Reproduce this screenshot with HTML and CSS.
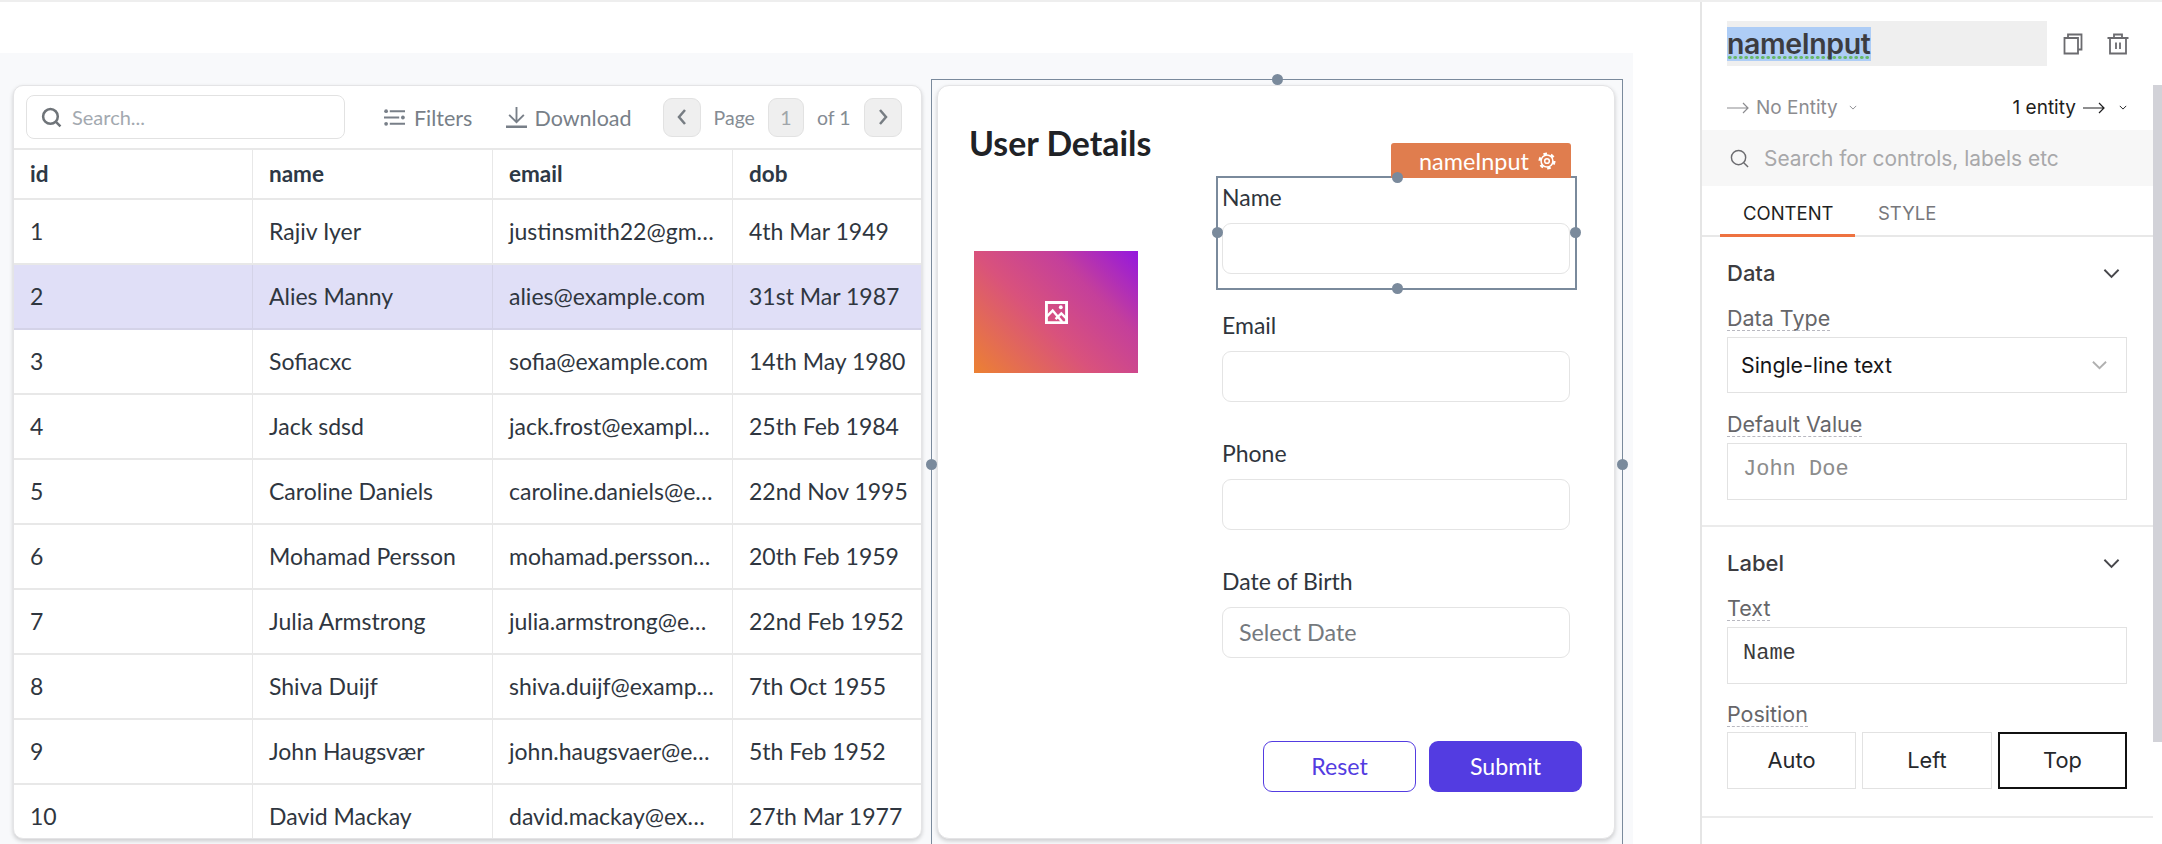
FILE: index.html
```html
<!DOCTYPE html>
<html lang="en">
<head>
    <meta charset="UTF-8">
    <title>Form builder</title>
    <link rel="stylesheet" href="styles.css">
</head>
<body>
    <div class="app">
        <div class="workspace">
            <div class="topbar"></div>
            <div class="canvas">
                <!-- Table widget -->
                <div class="table-card">
                    <div class="toolbar">
                        <div class="search-box">
                            <svg class="search-icon" viewBox="0 0 20 20"><circle cx="9" cy="9" r="7"/><path d="M14 14l4.500 4.500"/></svg>
                            <span>Search...</span>
                        </div>
                        <div class="tool tool-filters">
                            <svg viewBox="0 0 20 20"><path d="M5.500 4H20M0 10h14.500M5.500 16H20"/><circle class="dot" cx="2" cy="4" r="1.800"/><circle class="dot" cx="18" cy="10" r="1.800"/><circle class="dot" cx="2" cy="16" r="1.800"/></svg>
                            <span>Filters</span>
                        </div>
                        <div class="tool tool-download">
                            <svg viewBox="0 0 20 20"><path d="M10 0v14M3 7.500l7 7 7-7"/><path class="base" d="M0 19h20"/></svg>
                            <span>Download</span>
                        </div>
                        <div class="pager">
                            <div class="page-btn"><svg viewBox="0 0 12 20"><path d="M9 3L3 10l6 7"/></svg></div>
                            <span class="page-text">Page</span>
                            <div class="page-num">1</div>
                            <span class="page-text">of 1</span>
                            <div class="page-btn"><svg viewBox="0 0 12 20"><path d="M3 3l6 7-6 7"/></svg></div>
                        </div>
                    </div>
                    <table class="users">
                        <thead>
                            <tr><th>id</th><th>name</th><th>email</th><th>dob</th></tr>
                        </thead>
                        <tbody>
                            <tr><td>1</td><td>Rajiv Iyer</td><td>justinsmith22@gmail.com</td><td>4th Mar 1949</td></tr>
                            <tr class="active"><td>2</td><td>Alies Manny</td><td>alies@example.com</td><td>31st Mar 1987</td></tr>
                            <tr><td>3</td><td>Sofiacxc</td><td>sofia@example.com</td><td>14th May 1980</td></tr>
                            <tr><td>4</td><td>Jack sdsd</td><td>jack.frost@example.com</td><td>25th Feb 1984</td></tr>
                            <tr><td>5</td><td>Caroline Daniels</td><td>caroline.daniels@example.com</td><td>22nd Nov 1995</td></tr>
                            <tr><td>6</td><td>Mohamad Persson</td><td>mohamad.persson@example.com</td><td>20th Feb 1959</td></tr>
                            <tr><td>7</td><td>Julia Armstrong</td><td>julia.armstrong@example.com</td><td>22nd Feb 1952</td></tr>
                            <tr><td>8</td><td>Shiva Duijf</td><td>shiva.duijf@example.com</td><td>7th Oct 1955</td></tr>
                            <tr><td>9</td><td>John Haugsvær</td><td>john.haugsvaer@example.com</td><td>5th Feb 1952</td></tr>
                            <tr><td>10</td><td>David Mackay</td><td>david.mackay@example.com</td><td>27th Mar 1977</td></tr>
                        </tbody>
                    </table>
                </div>

                <!-- Form widget -->
                <div class="form-frame">
                    <span class="handle handle-top"></span>
                    <span class="handle handle-left"></span>
                    <span class="handle handle-right"></span>
                    <div class="form-card">
                        <div class="form-left">
                            <h2>User Details</h2>
                            <div class="image-box">
                                <svg viewBox="0 0 24 24"><path class="frame" d="M1.500 1.500h21v21h-21z"/><path class="scene" d="M2 16l6-6 10 12M11 19l6-6 6 6"/><circle cx="16.500" cy="6.500" r="2"/></svg>
                            </div>
                        </div>
                        <div class="form-right">
                            <div class="field">
                                <div class="selected-box">
                                    <div class="name-tag">nameInput
                                        <svg viewBox="0 0 20 20"><circle class="gear-teeth" cx="10" cy="10" r="8.200"/><circle cx="10" cy="10" r="6.600"/><circle cx="10" cy="10" r="2.600"/></svg>
                                    </div>
                                    <span class="handle handle-top"></span>
                                    <span class="handle handle-left"></span>
                                    <span class="handle handle-right"></span>
                                    <span class="handle handle-bottom"></span>
                                </div>
                                <label>Name</label>
                                <div class="text-input"></div>
                            </div>
                            <div class="field">
                                <label>Email</label>
                                <div class="text-input"></div>
                            </div>
                            <div class="field">
                                <label>Phone</label>
                                <div class="text-input"></div>
                            </div>
                            <div class="field">
                                <label>Date of Birth</label>
                                <div class="text-input placeholder">Select Date</div>
                            </div>
                            <div class="form-actions">
                                <button class="btn btn-outline">Reset</button>
                                <button class="btn btn-primary">Submit</button>
                            </div>
                        </div>
                    </div>
                </div>
            </div>
        </div>

        <!-- Properties panel -->
        <div class="panel">
            <div class="panel-scrollbar"></div>
            <div class="panel-head">
                <div class="name-input"><span class="name-selected">nameInput</span></div>
                <svg class="head-icon" viewBox="0 0 20 22"><path d="M5 5V1.500h13.500v15H15"/><path d="M1.500 5h13.500v15.500H1.500z"/></svg>
                <svg class="head-icon trash" viewBox="0 0 22 22"><path d="M0.500 5h21M7 5V1.500h8V5M3 5v15.500h16V5M9 9.500v6.500M13 9.500v6.500"/></svg>
            </div>
            <div class="entity-row">
                <div class="entity muted">
                    <svg class="arrow" viewBox="0 0 22 12"><path d="M0 6h21M16 1l5 5-5 5"/></svg>
                    <span>No Entity</span>
                    <svg class="mini-chevron" viewBox="0 0 10 6"><path d="M1 1l4 4 4-4"/></svg>
                </div>
                <div class="entity">
                    <span>1 entity</span>
                    <svg class="arrow" viewBox="0 0 22 12"><path d="M0 6h21M16 1l5 5-5 5"/></svg>
                    <svg class="mini-chevron" viewBox="0 0 10 6"><path d="M1 1l4 4 4-4"/></svg>
                </div>
            </div>
            <div class="control-search">
                <svg viewBox="0 0 20 20"><circle cx="9" cy="9" r="7.500"/><path d="M14.500 14.500l4.500 4.500"/></svg>
                <span>Search for controls, labels etc</span>
            </div>
            <div class="tabs">
                <div class="tab tab-active">CONTENT</div>
                <div class="tab">STYLE</div>
            </div>
            <div class="section">
                <div class="section-title">
                    <span>Data</span>
                    <svg viewBox="0 0 18 11"><path d="M1.500 1.500L9 9l7.500-7.500"/></svg>
                </div>
                <div class="prop-label"><span>Data Type</span></div>
                <div class="prop-select">
                    <span>Single-line text</span>
                    <svg viewBox="0 0 16 10"><path d="M1 1.500l7 7 7-7"/></svg>
                </div>
                <div class="prop-label"><span>Default Value</span></div>
                <div class="prop-input code-placeholder">John Doe</div>
            </div>
            <div class="section">
                <div class="section-title">
                    <span>Label</span>
                    <svg viewBox="0 0 18 11"><path d="M1.500 1.500L9 9l7.500-7.500"/></svg>
                </div>
                <div class="prop-label"><span>Text</span></div>
                <div class="prop-input">Name</div>
                <div class="prop-label"><span>Position</span></div>
                <div class="segments">
                    <div class="segment">Auto</div>
                    <div class="segment">Left</div>
                    <div class="segment segment-on">Top</div>
                </div>
            </div>
        </div>
    </div>
</body>
</html>
```

FILE: styles.css
```css
* { box-sizing: border-box; }
html, body { margin: 0; height: 100%; overflow: hidden; background: white; }
body { font-family: Lato, sans-serif; }
svg { display: block; fill: none; stroke: currentColor; }

.app { display: flex; height: 844px; border-top: 2px solid #eeeeee; }
.workspace { width: 1633px; margin-right: 67px; display: flex; flex-direction: column; }
.topbar { height: 51px; flex: none; }
.canvas { flex: 1; min-height: 0; background: #f8f9fb; display: flex; align-items: flex-start; padding: 26px 0 0 13px; overflow: hidden; }

/* table card */
.table-card { width: 909px; height: 754px; margin-top: 6px; background: white; border: 1px solid #e4e4e6; border-radius: 10px; box-shadow: 0 2px 4px rgba(0, 0, 0, 0.18); overflow: hidden; flex: none; }
.toolbar { height: 64px; display: flex; align-items: center; padding-left: 12px; border-bottom: 2px solid #e8e8e8; }
.search-box { width: 319px; height: 44px; border: 1.500px solid #e2e2e2; border-radius: 8px; display: flex; align-items: center; padding-left: 14px; color: #a3a9b0; font-size: 20px; }
.search-icon { width: 21px; height: 21px; margin-right: 10px; color: #6f7479; stroke-width: 2.400; }
.tool { display: flex; align-items: center; margin-top: 1px; color: #787f88; font-size: 21.500px; }
.tool svg { width: 21px; height: 21px; stroke-width: 1.800; margin-right: 9px; }
.tool .dot { fill: currentColor; stroke: none; }
.tool .base { stroke-width: 2.600; }
.tool-filters { margin-left: 39px; }
.tool-download { margin-left: 34px; }
.tool-download svg { margin-right: 7px; }
.pager { display: flex; align-items: center; margin-left: 31px; color: #858c94; font-size: 19.500px; }
.page-btn { width: 38px; height: 39px; background: #efefef; border: 1px solid #e2e2e2; border-radius: 9px; display: flex; align-items: center; justify-content: center; color: #777d83; }
.page-btn svg { width: 12px; height: 20px; stroke-width: 2.500; }
.page-text { margin: 0 13px; }
.page-num { width: 36px; height: 39px; background: #efefef; border: 1px solid #e2e2e2; border-radius: 9px; display: flex; align-items: center; justify-content: center; color: #a0a5aa; }

.users { width: 959px; table-layout: fixed; border-collapse: separate; border-spacing: 0; font-size: 23px; color: #2f3640; }
.users th, .users td { border-bottom: 2px solid #e8e8e8; border-right: 1px solid #e8e8e8; padding: 0 16px 2px 16px; white-space: nowrap; overflow: hidden; text-overflow: ellipsis; text-align: left; }
.users th:first-child, .users td:first-child { width: 239px; padding-left: 16px; }
.users th { height: 50px; font-size: 22.500px; font-weight: 700; color: #2d3845; }
.users td { height: 65px; }
.users tr.active td { background: #e0dff7; border-color: #d4d3e8; }

/* form card */
.form-frame { position: relative; width: 692px; height: 772px; margin-left: 9px; flex: none; border: 1.500px solid #7a8a9c; padding: 5px 5px; }
.handle { position: absolute; width: 11px; height: 11px; border-radius: 50%; background: #7a8a9c; }
.handle-top { top: -6px; left: 50%; margin-left: -5px; }
.handle-bottom { bottom: -6px; left: 50%; margin-left: -5px; }
.handle-left { left: -6px; top: 50%; margin-top: -6px; }
.handle-right { right: -6px; top: 50%; margin-top: -6px; }
.form-card { width: 678px; height: 754px; background: white; border: 1px solid #e4e4e6; border-radius: 12px; box-shadow: 0 2px 4px rgba(0, 0, 0, 0.18); display: flex; padding: 37px 0 0 32px; }
.form-left { width: 252px; flex: none; }
.form-left h2 { margin: 0 0 0 -1px; font-size: 33.800px; line-height: 40px; font-weight: 700; color: #202226; }
.image-box { width: 164px; height: 122px; margin: 88px 0 0 4px; background: linear-gradient(45deg, #ec8132 0%, #d9527c 42%, #c43f9b 70%, #9417df 100%); display: flex; align-items: center; justify-content: center; color: white; }
.image-box svg { width: 23px; height: 23px; }
.image-box .frame { stroke-width: 3; }
.image-box .scene { stroke-width: 2.500; }
.image-box circle { fill: white; stroke: none; }

.form-right { width: 348px; margin-top: 53px; flex: none; }
.field { position: relative; height: 128px; padding-top: 9px; }
.field label { display: block; font-size: 23px; line-height: 24px; margin-bottom: 14px; color: #2f353d; }
.text-input { height: 51px; border: 1.500px solid #e4e4e4; border-radius: 9px; background: white; }
.placeholder { display: flex; align-items: center; padding: 0 0 2px 16px; color: #75797e; font-size: 23.300px; }
.selected-box { position: absolute; top: 0; left: -6px; width: 361px; height: 114px; border: 2px solid #7a8a9c; pointer-events: none; }
.name-tag { position: absolute; right: 4px; bottom: 100%; width: 180px; height: 35px; background: #e07d4e; border-radius: 3px 3px 0 0; color: white; font-size: 23.400px; display: flex; align-items: center; padding-left: 28px; }
.name-tag svg { width: 18px; height: 18px; margin-left: 9px; stroke-width: 1.700; }
.name-tag .gear-teeth { stroke-width: 2.600; stroke-dasharray: 4 4.590; }
.form-actions { display: flex; justify-content: flex-end; gap: 13px; margin: 53px -12px 0 0; }
.btn { width: 153px; height: 51px; padding-bottom: 3px; border-radius: 9px; font-family: Lato, sans-serif; font-size: 23.200px; cursor: pointer; }
.btn-outline { background: white; border: 1.500px solid #533ce1; color: #533ce1; }
.btn-primary { background: #533ce1; border: none; color: white; }

/* properties panel */
.panel { position: relative; width: 462px; border-left: 2px solid #e5e5e5; font-family: Inter, sans-serif; }
.panel-scrollbar { position: absolute; top: 83px; right: 0; width: 9px; height: 657px; background: #d2d2d8; }
.panel-head { height: 83px; padding: 19px 0 0 25px; display: flex; align-items: flex-start; }
.name-input { width: 320px; height: 45px; background: #efefef; padding-top: 6px; margin-right: 16px; flex: none; }
.name-selected { display: inline-block; width: 144px; height: 34px; background: #aecdf6; color: #3c3c40; font-size: 28.500px; line-height: 34px; font-weight: 600; letter-spacing: -0.400px; white-space: nowrap; background-image: radial-gradient(circle, #68b868 1.600px, transparent 1.800px); background-size: 5.500px 5px; background-repeat: repeat-x; background-position: 0 28px; }
.head-icon { width: 20px; height: 22px; margin-top: 12px; color: #6b6b6f; stroke-width: 1.800; }
.trash { width: 22px; margin-left: 24px; }
.entity-row { height: 45px; padding: 0 35px 0 25px; display: flex; align-items: center; justify-content: space-between; font-size: 19px; color: #1e1e20; }
.entity { display: flex; align-items: center; }
.entity.muted { color: #8c8c90; }
.arrow { width: 22px; height: 12px; stroke-width: 1.200; margin: 0 7px; }
.entity.muted .arrow { margin-left: 0; }
.mini-chevron { width: 8px; height: 5px; margin-left: 7px; stroke-width: 1.200; }
.entity.muted .mini-chevron { margin-left: 11px; }
.control-search { height: 56px; margin-right: 9px; background: #f7f7f7; display: flex; align-items: center; padding-left: 28px; font-size: 20.900px; color: #a8a8aa; }
.control-search svg { width: 19px; height: 19px; margin-right: 15px; color: #6c6c70; stroke-width: 1.500; }
.tabs { height: 51px; margin-right: 9px; padding-left: 18px; display: flex; border-bottom: 2px solid #e8e8e8; }
.tab { height: 51px; padding: 15px 23px 0; font-size: 18.500px; line-height: 24px; color: #77777b; }
.tab-active { color: #1f1f22; border-bottom: 3px solid #ee7240; border-radius: 4px 4px 0 0; width: 135px; }
.section { margin-right: 9px; padding: 24px 26px 25px 25px; border-bottom: 2px solid #ebebeb; }
.section-title { height: 24px; display: flex; align-items: center; justify-content: space-between; font-size: 22px; font-weight: 500; color: #3c3c40; margin-bottom: 22px; }
.section-title svg { width: 17px; height: 11px; margin-right: 7px; stroke-width: 2; color: #48484c; }
.prop-label { height: 24px; font-size: 21.500px; line-height: 23px; color: #666669; margin-bottom: 6px; margin-top: 20px; }
.section-title + .prop-label { margin-top: 0; }
.prop-input + .prop-label { margin-top: 19px; }
.prop-label span { display: inline-block; border-bottom: 1px dashed #b8b8c0; }
.prop-select, .prop-input { height: 57px; border: 1.500px solid #e2e2e2; display: flex; align-items: center; }
.prop-select { height: 56px; justify-content: space-between; padding: 0 19px 0 13px; font-size: 21.300px; color: #151517; }
.prop-select svg { width: 15px; height: 10px; color: #b0b0b0; stroke-width: 2; }
.prop-input { padding-left: 15px; font-family: "Liberation Mono", monospace; font-size: 22px; color: #3a3a3c; padding-bottom: 4px; }
.code-placeholder { color: #8c8c8c; }
.segments { display: grid; grid-template-columns: 129px 130px 129px; column-gap: 6px; margin: -1px 0 2px; }
.segment { height: 57px; padding-bottom: 2px; border: 1.500px solid #e2e2e2; display: flex; align-items: center; justify-content: center; font-size: 21.800px; color: #26282c; }
.segment-on { border: 2px solid #111111; }
```
